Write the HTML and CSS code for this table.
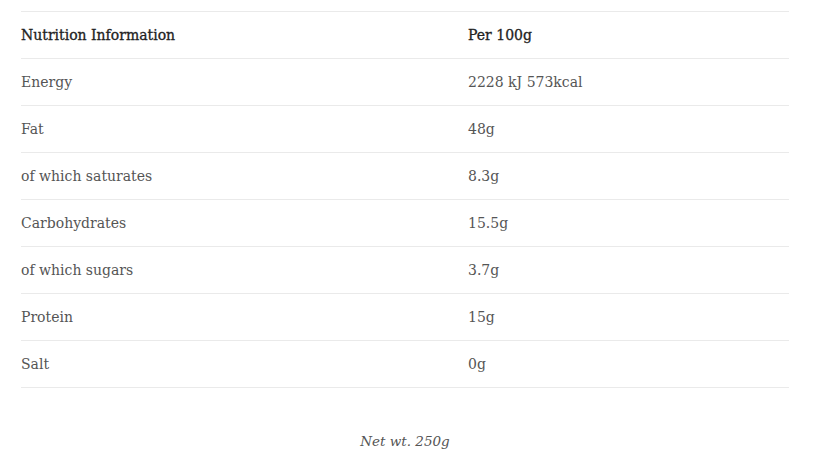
FILE: index.html
```html
<!DOCTYPE html>
<html lang="en">
<head>
    <meta charset="UTF-8">
    <meta name="viewport" content="width=device-width, initial-scale=1.0">
    <title>Nutrition Information</title>
    <link rel="stylesheet" href="styles.css">
</head>
<body>
    <div class="nutrition">
        <table class="nutrition-table">
            <thead>
                <tr>
                    <th>Nutrition Information</th>
                    <th>Per 100g</th>
                </tr>
            </thead>
            <tbody>
                <tr><td>Energy</td><td>2228 kJ 573kcal</td></tr>
                <tr><td>Fat</td><td>48g</td></tr>
                <tr><td>of which saturates</td><td>8.3g</td></tr>
                <tr><td>Carbohydrates</td><td>15.5g</td></tr>
                <tr><td>of which sugars</td><td>3.7g</td></tr>
                <tr><td>Protein</td><td>15g</td></tr>
                <tr><td>Salt</td><td>0g</td></tr>
            </tbody>
        </table>
        <p class="net-weight">Net wt. 250g</p>
    </div>
</body>
</html>
```

FILE: styles.css
```css
body {
    margin: 0;
    padding: 0;
    background-color: #fff;
    font-family: "DejaVu Serif", "Liberation Serif", serif;
    color: #555;
}
.nutrition {
    padding: 11px 31px 0 21px;
}
.nutrition-table {
    width: 100%;
    border-collapse: collapse;
    font-size: 14px;
}
.nutrition-table th,
.nutrition-table td {
    height: 46px;
    padding: 0;
    text-align: left;
    vertical-align: middle;
    border-top: 1px solid #eaeaea;
    border-bottom: 1px solid #eaeaea;
}
.nutrition-table th {
    color: #222;
    font-weight: normal;
    -webkit-text-stroke: 0.3px #222;
}
.nutrition-table th:first-child,
.nutrition-table td:first-child {
    width: 447px;
}
.net-weight {
    margin: 45px 0 0;
    text-align: center;
    font-style: italic;
    font-size: 13.5px;
    color: #555;
}
```
